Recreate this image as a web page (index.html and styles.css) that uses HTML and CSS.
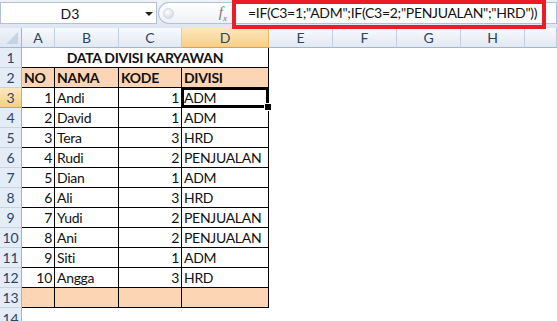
FILE: index.html
```html
<!DOCTYPE html>
<html>
<head>
<meta charset="utf-8">
<link rel="stylesheet" href="styles.css">
</head>
<body>
<div class="app">
  <div class="fbar">
    <div class="namebox">
      <span class="name">D3</span>
      <span class="caret"></span>
    </div>
    <div class="fxzone">
      <span class="knob"></span>
      <span class="fx">f<sub>x</sub></span>
    </div>
    <div class="formula">=IF(C3=1;"ADM";IF(C3=2;"PENJUALAN";"HRD"))</div>
    <div class="mark"></div>
  </div>
  <div class="sheet">
    <div class="corner"><span class="tri"></span></div>
    <div class="ch">A</div><div class="ch">B</div><div class="ch">C</div><div class="ch hl">D</div>
    <div class="ch">E</div><div class="ch">F</div><div class="ch">G</div><div class="ch">H</div><div class="ch"></div>

    <div class="rh">1</div>
    <div class="title">DATA DIVISI KARYAWAN</div>
    <div></div><div></div><div></div><div></div><div></div>

    <div class="rh">2</div>
    <div class="c f b">NO</div><div class="c f b">NAMA</div><div class="c f b">KODE</div><div class="c f b">DIVISI</div>
    <div></div><div></div><div></div><div></div><div></div>

    <div class="rh hl">3</div>
    <div class="c r">1</div><div class="c">Andi</div><div class="c r">1</div><div class="c sel">ADM</div>
    <div></div><div></div><div></div><div></div><div></div>

    <div class="rh">4</div>
    <div class="c r">2</div><div class="c">David</div><div class="c r">1</div><div class="c">ADM</div>
    <div></div><div></div><div></div><div></div><div></div>

    <div class="rh">5</div>
    <div class="c r">3</div><div class="c">Tera</div><div class="c r">3</div><div class="c">HRD</div>
    <div></div><div></div><div></div><div></div><div></div>

    <div class="rh">6</div>
    <div class="c r">4</div><div class="c">Rudi</div><div class="c r">2</div><div class="c">PENJUALAN</div>
    <div></div><div></div><div></div><div></div><div></div>

    <div class="rh">7</div>
    <div class="c r">5</div><div class="c">Dian</div><div class="c r">1</div><div class="c">ADM</div>
    <div></div><div></div><div></div><div></div><div></div>

    <div class="rh">8</div>
    <div class="c r">6</div><div class="c">Ali</div><div class="c r">3</div><div class="c">HRD</div>
    <div></div><div></div><div></div><div></div><div></div>

    <div class="rh">9</div>
    <div class="c r">7</div><div class="c">Yudi</div><div class="c r">2</div><div class="c">PENJUALAN</div>
    <div></div><div></div><div></div><div></div><div></div>

    <div class="rh">10</div>
    <div class="c r">8</div><div class="c">Ani</div><div class="c r">2</div><div class="c">PENJUALAN</div>
    <div></div><div></div><div></div><div></div><div></div>

    <div class="rh">11</div>
    <div class="c r">9</div><div class="c">Siti</div><div class="c r">1</div><div class="c">ADM</div>
    <div></div><div></div><div></div><div></div><div></div>

    <div class="rh">12</div>
    <div class="c r">10</div><div class="c">Angga</div><div class="c r">3</div><div class="c">HRD</div>
    <div></div><div></div><div></div><div></div><div></div>

    <div class="rh">13</div>
    <div class="c f"></div><div class="c f"></div><div class="c f"></div><div class="c f"></div>
    <div></div><div></div><div></div><div></div><div></div>

    <div class="rh last">14</div>
    <div></div><div></div><div></div><div></div>
    <div></div><div></div><div></div><div></div><div></div>
  </div>
</div>
</body>
</html>
```

FILE: styles.css
```css
* { box-sizing: border-box; }
html, body { margin: 0; padding: 0; background: #fff; }
body { width: 557px; height: 321px; overflow: hidden; font-family: Lato, "Open Sans", sans-serif; }
.app { width: 557px; position: relative; }

.fbar {
  height: 28px;
  display: flex;
  align-items: stretch;
  padding: 2px 0 4px 0;
  background: linear-gradient(#eef2f8, #dfe6f1);
  position: relative;
}
.namebox {
  flex: 0 0 157px;
  background: #fff;
  border: 1px solid #b3c1d5;
  display: flex;
  align-items: center;
  position: relative;
}
.name { width: 138px; text-align: center; font-size: 14px; color: #111; }
.caret {
  width: 0; height: 0;
  border-left: 4px solid transparent;
  border-right: 4px solid transparent;
  border-top: 4px solid #222;
  margin-left: 6px;
  margin-top: 1px;
}
.fxzone {
  flex: 0 0 76px;
  margin-left: 1px;
  border: 1px solid #b3c1d5;
  border-right: none;
  border-radius: 11px 0 0 11px;
  background: linear-gradient(#ffffff, #eef1f6);
  display: flex;
  align-items: center;
  justify-content: space-between;
  padding: 0 7px 0 4px;
}
.knob {
  width: 11px; height: 11px; border-radius: 50%;
  background: radial-gradient(circle at 40% 35%, #ffffff, #c9d1dc);
  border: 1px solid #d3d9e2;
}
.fx { font-family: "Liberation Serif", serif; font-style: italic; font-size: 15px; color: #777; }
.fx sub { font-size: 9px; }
.formula {
  flex: 1 1 auto;
  min-width: 0;
  background: #fff;
  border: 1px solid #b3c1d5;
  font-size: 14px;
  letter-spacing: -0.3px;
  color: #111;
  padding-left: 13px;
  line-height: 20px;
  white-space: nowrap;
  overflow: hidden;
}
.mark {
  position: absolute;
  left: 232px; top: 0;
  width: 314px; height: 29px;
  border: 4px solid #ec1c24;
}

.sheet {
  display: grid;
  grid-template-columns: 22px 33px 64px 63px 87px 64px 64px 64px 64px 32px;
  grid-auto-rows: 20px;
  font-size: 14px;
  letter-spacing: -0.3px;
  color: #111;
}
.corner {
  background: linear-gradient(#eef3fa, #dde6f2);
  border-right: 1px solid #9eb6ce;
  border-bottom: 1px solid #9eb6ce;
  position: relative;
}
.tri {
  position: absolute; right: 3px; bottom: 3px;
  width: 0; height: 0;
  border-left: 12px solid transparent;
  border-bottom: 12px solid #c6d3e4;
}
.ch {
  background: linear-gradient(#f8fafd, #e2e9f3);
  border-right: 1px solid #c3cfdf;
  border-bottom: 1px solid #9eb6ce;
  text-align: center;
  font-size: 14px;
  letter-spacing: 0;
  line-height: 20px;
  color: #2b4466;
}
.ch.hl { background: linear-gradient(#fde7bd, #f7cf86); border-right-color: #e5b76a; border-bottom-color: #d7a04b; }
.rh {
  background: #e4ecf7;
  border-right: 1px solid #9eb6ce;
  border-bottom: 1px solid #c5d3e3;
  text-align: center;
  font-size: 14px;
  letter-spacing: 0;
  line-height: 20px;
  color: #2b4466;
}
.rh.last { line-height: 18px; padding-top: 2px; }
.rh.hl { background: linear-gradient(#fde7bd, #f7cf86); border-bottom-color: #d7a04b; }
.title {
  grid-column: span 4;
  border-right: 1px solid #000;
  border-bottom: 1px solid #000;
  text-align: center;
  font-weight: bold;
  line-height: 20px;
}
.c {
  border-right: 1px solid #000;
  border-bottom: 1px solid #000;
  padding: 0 2px;
  line-height: 20px;
  white-space: nowrap;
  overflow: hidden;
}
.c.r { text-align: right; }
.c.f { background: #fcd5b4; }
.c.b { font-weight: bold; }
.sel { position: relative; overflow: visible; box-shadow: inset 0 0 0 2px #000, inset 0 0 0 3px #fff; }
.sel::after {
  content: "";
  position: absolute;
  right: -4px; bottom: -4px;
  width: 6px; height: 6px;
  background: #000;
  border: 1px solid #fff;
}
```
